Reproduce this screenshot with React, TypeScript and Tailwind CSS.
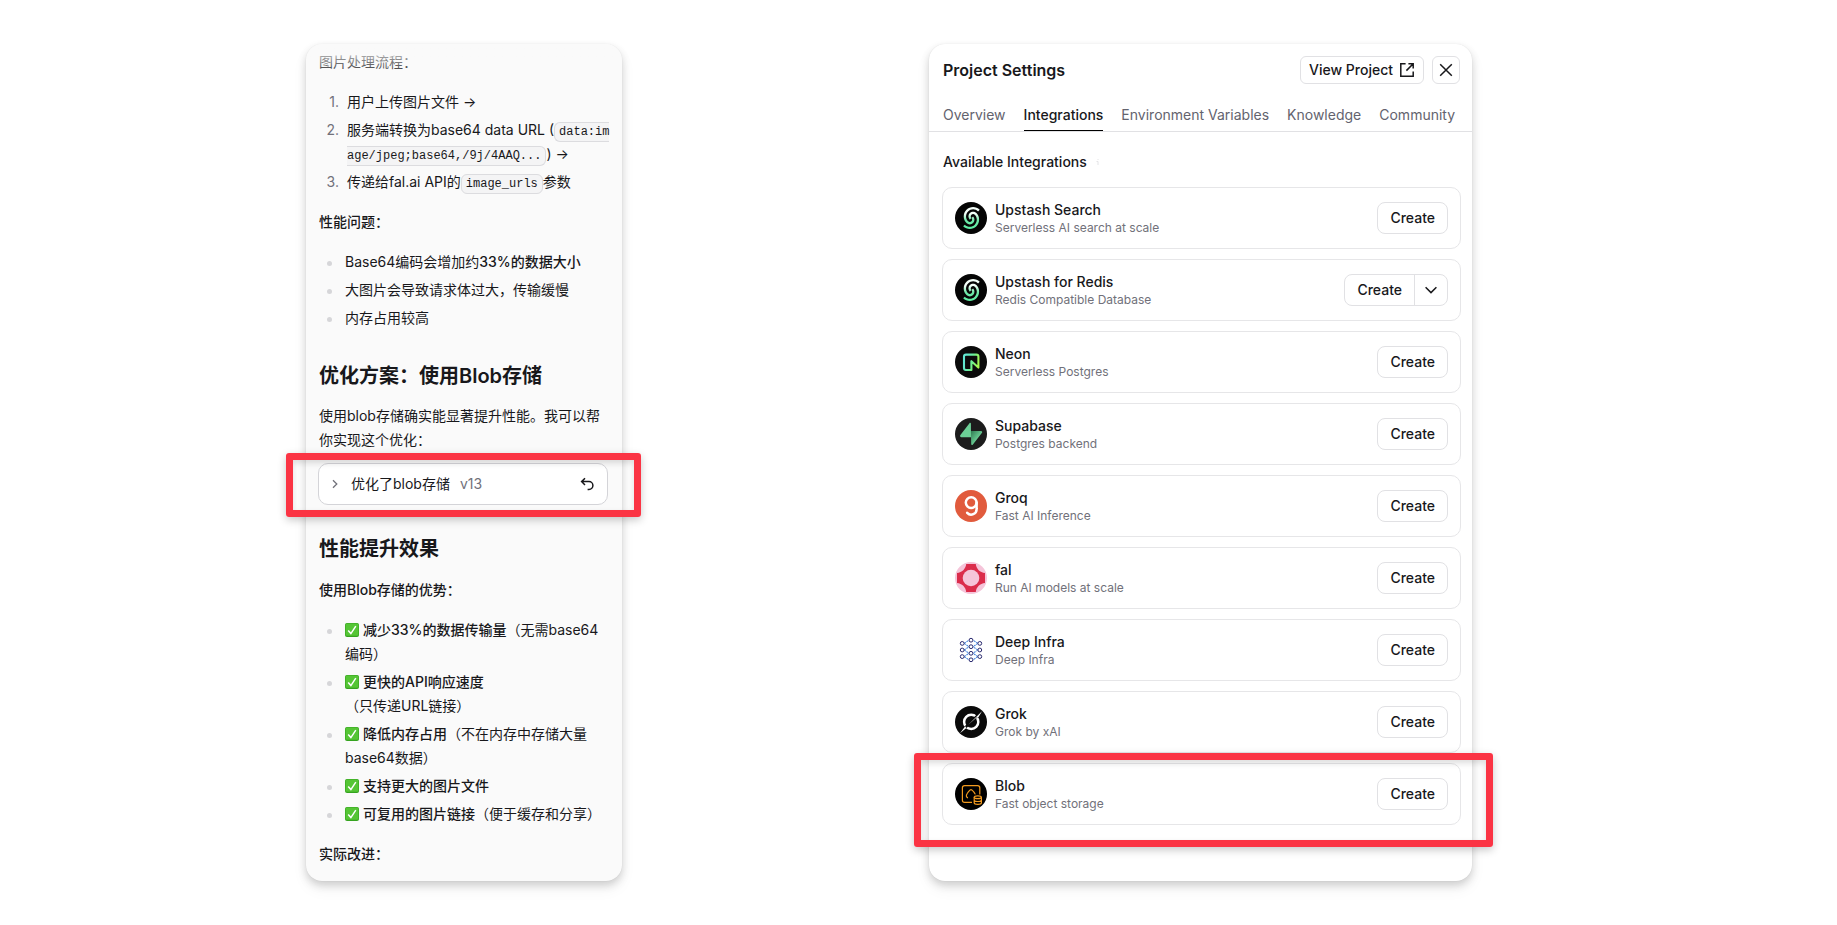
import type { ReactNode } from "react";

const highlight =
  "pointer-events-none absolute z-10 rounded-[3px] border-[7px] border-[#fb3444] shadow-[0_3px_8px_rgba(0,0,0,0.22),inset_0_3px_6px_rgba(0,0,0,0.14)]";

const panelShadow =
  "rounded-2xl shadow-[0_0_1px_rgba(0,0,0,0.12),0_4px_8px_rgba(0,0,0,0.17),0_8px_16px_rgba(0,0,0,0.05)]";

function Check() {
  return (
    <svg viewBox="0 0 14 14" className="mr-1 inline-block size-3.5 align-[-2px]" role="img" aria-label="✅">
      <rect width="14" height="14" rx="2" fill="#35a31f" />
      <rect x="0.6" y="0.6" width="12.8" height="12.2" rx="1.6" fill="#55c535" />
      <path d="M3.2 7.4 5.9 10.6 10.8 3.2" fill="none" stroke="#fff" strokeWidth="1.5" />
    </svg>
  );
}

function Bullet({ children }: { children: ReactNode }) {
  return (
    <li className="flex">
      <span className="mt-[11px] mr-[13px] ml-2 size-[5px] shrink-0 rounded-full bg-[#d6d6d9]" />
      <div className="min-w-0 whitespace-nowrap">{children}</div>
    </li>
  );
}

function Step({ n, children }: { n: number; children: ReactNode }) {
  return (
    <li className="flex">
      <span className="mr-2 w-5 shrink-0 text-right text-[#71717a]">{n}.</span>
      <div className="min-w-0 whitespace-nowrap">{children}</div>
    </li>
  );
}

function Code({ children }: { children: ReactNode }) {
  return (
    <code className="rounded-md border border-[#dcdcdf] bg-[#f4f4f5] px-1 py-[2px] font-['Liberation_Mono',monospace] text-xs">
      {children}
    </code>
  );
}

function ChatPanel() {
  return (
    <article
      className={`relative bg-[#fafafa] px-[13px] pt-1.5 pb-[15px] text-sm leading-6 text-[#18181b] ${panelShadow}`}
    >
      <div className="pointer-events-none absolute inset-x-0 top-0 h-8 rounded-t-2xl bg-linear-to-b from-[#fafafa] to-transparent" />
      <p>图片处理流程：</p>
      <ol className="mt-4 flex flex-col gap-1">
        <Step n={1}>用户上传图片文件 →</Step>
        <Step n={2}>
          服务端转换为base64 data URL (
          <Code>
            data:im
            <br />
            age/jpeg;base64,/9j/4AAQ...
          </Code>
          ) →
        </Step>
        <Step n={3}>
          传递给fal.ai API的<Code>image_urls</Code>参数
        </Step>
      </ol>
      <p className="mt-4 font-medium">性能问题：</p>
      <ul className="mt-4 flex flex-col gap-1">
        <Bullet>
          Base64编码会增加约<strong className="font-medium">33%的数据大小</strong>
        </Bullet>
        <Bullet>大图片会导致请求体过大，传输缓慢</Bullet>
        <Bullet>内存占用较高</Bullet>
      </ul>
      <h2 className="mt-8 text-xl leading-7 font-semibold">优化方案：使用Blob存储</h2>
      <p className="mt-3.5">使用blob存储确实能显著提升性能。我可以帮你实现这个优化：</p>
      <div className="relative mt-[11px] mr-px -ml-px">
        <div className="flex h-[42px] items-center rounded-[10px] border border-[#d4d4d8] bg-white px-3">
          <button type="button" className="flex items-center" aria-label="展开">
            <svg viewBox="0 0 8 12" className="h-3 w-2" fill="none" stroke="#71717a" strokeWidth="1.3">
              <path d="M2 2.2 5.8 6 2 9.8" />
            </svg>
          </button>
          <span className="ml-3">优化了blob存储</span>
          <span className="ml-2.5 text-[#71717a]">v13</span>
          <button type="button" className="ml-auto" aria-label="恢复此版本">
            <svg viewBox="0 0 16 16" className="size-4" fill="none" stroke="#18181b" strokeWidth="1.5">
              <path d="M6 2.2 2.6 5.6 6 9M2.8 5.6H10a3.9 3.9 0 0 1 0 7.8H8.6" />
            </svg>
          </button>
        </div>
        <div className={`-top-2.5 -right-[33px] -bottom-3 -left-8 ${highlight}`} />
      </div>
      <h2 className="mt-[30px] text-xl leading-7 font-semibold">性能提升效果</h2>
      <p className="mt-[15px] font-medium">使用Blob存储的优势：</p>
      <ul className="mt-4 flex flex-col gap-1">
        <Bullet>
          <Check />
          <strong className="font-medium">减少33%的数据传输量</strong>（无需base64
          <br />
          编码）
        </Bullet>
        <Bullet>
          <Check />
          <strong className="font-medium">更快的API响应速度</strong>
          <br />
          （只传递URL链接）
        </Bullet>
        <Bullet>
          <Check />
          <strong className="font-medium">降低内存占用</strong>（不在内存中存储大量
          <br />
          base64数据）
        </Bullet>
        <Bullet>
          <Check />
          <strong className="font-medium">支持更大的图片文件</strong>
        </Bullet>
        <Bullet>
          <Check />
          <strong className="font-medium">可复用的图片链接</strong>（便于缓存和分享）
        </Bullet>
      </ul>
      <p className="mt-4 font-medium">实际改进：</p>
    </article>
  );
}

function UpstashLogo({ id }: { id: string }) {
  return (
    <svg viewBox="0 0 32 32" className="size-8" aria-hidden="true">
      <defs>
        <linearGradient id={id} x1="0" y1="0" x2="0" y2="1">
          <stop offset="0.3" stopColor="#f4fff9" />
          <stop offset="0.6" stopColor="#6ee7a8" />
          <stop offset="1" stopColor="#5df0a4" />
        </linearGradient>
      </defs>
      <circle cx="16" cy="16" r="16" fill="#050505" />
      <g transform="translate(5.4 5) scale(0.92)">
        <path
          fill={`url(#${id})`}
          d="M13.8027 0C11.193 0 8.583.9952 6.5918 2.9863c-3.9823 3.9823-3.9823 10.4396 0 14.4219 1.9911 1.9911 5.2198 1.9911 7.211 0 1.991-1.9911 1.991-5.2198 0-7.211L12 12c.9956.9956.9956 2.6098 0 3.6055-.9956.9955-2.6099.9955-3.6055 0-2.9866-2.9868-2.9866-7.8297 0-10.8164 2.9868-2.9868 7.8297-2.9868 10.8164 0l1.8028-1.8028C19.0225.9952 16.4125 0 13.8027 0zM12 12c-.9956-.9956-.9956-2.6098 0-3.6055.9956-.9955 2.6098-.9955 3.6055 0 2.9867 2.9868 2.9867 7.8297 0 10.8164-2.9867 2.9868-7.8297 2.9868-10.8164 0l-1.8028 1.8028c3.9823 3.9822 10.4396 3.9822 14.4219 0 3.9823-3.9824 3.9823-10.4397 0-14.4219-.9956-.9956-2.3006-1.4922-3.6055-1.4922-1.3048 0-2.6099.4966-3.6054 1.4922-1.9912 1.9912-1.9912 5.2198 0 7.211z"
        />
      </g>
    </svg>
  );
}

function NeonLogo() {
  return (
    <svg viewBox="0 0 32 32" className="size-8" aria-hidden="true">
      <defs>
        <linearGradient id="neon" x1="0" y1="0.3" x2="1" y2="0.6">
          <stop offset="0.1" stopColor="#62e8d2" />
          <stop offset="0.6" stopColor="#6ff08c" />
          <stop offset="1" stopColor="#a6f94f" />
        </linearGradient>
      </defs>
      <circle cx="16" cy="16" r="16" fill="#0b0b0b" />
      <path
        d="M16.4 24H11A2 2 0 0 1 9 22V10.6a2 2 0 0 1 2-2H21.4a2 2 0 0 1 2 2V21.6L16.4 15.2V24Z"
        fill="none"
        stroke="url(#neon)"
        strokeWidth="2.1"
        strokeLinejoin="round"
      />
    </svg>
  );
}

function SupabaseLogo() {
  return (
    <svg viewBox="0 0 32 32" className="size-8" aria-hidden="true">
      <defs>
        <linearGradient id="supa" x1="0" y1="0" x2="0.6" y2="0.6">
          <stop offset="0" stopColor="#2f7a52" />
          <stop offset="1" stopColor="#6ccf96" />
        </linearGradient>
      </defs>
      <circle cx="16" cy="16" r="16" fill="#1c1c1c" />
      <path d="M16 13H26C27.2 13 27.6 14.2 26.8 15.1L17.7 26.7C17.2 27.4 16.2 27.1 16.2 26.3L16 19Z" fill="url(#supa)" />
      <path d="M15.9 5.6C15.9 4.8 15 4.5 14.5 5.2L5.4 16.9C4.7 17.9 5.2 19.2 6.4 19.2H16Z" fill="#6ccf96" />
    </svg>
  );
}

function GroqLogo() {
  return (
    <svg viewBox="0 0 32 32" className="size-8" aria-hidden="true">
      <circle cx="16" cy="16" r="16" fill="#e15b3d" />
      <g fill="none" stroke="#fff" strokeWidth="2.5" strokeLinecap="round">
        <circle cx="16.2" cy="12.6" r="5.4" />
        <path d="M21.6 12.6V18.9A5.4 5.4 0 0 1 12.2 22.8" />
      </g>
    </svg>
  );
}

function FalLogo() {
  return (
    <svg viewBox="0 0 32 32" className="size-8" aria-hidden="true">
      <circle cx="16" cy="16" r="16" fill="#f5c4d9" />
      <path
        d="M11.2 2H20.8C21.2 6.8 25 10.6 30 11V21C25 21.4 21.2 25.2 20.8 30H11.2C10.8 25.2 7 21.4 2 21V11C7 10.6 10.8 6.8 11.2 2Z"
        fill="#db2c4b"
      />
      <circle cx="16" cy="16" r="8.3" fill="#f5c4d9" />
    </svg>
  );
}

const sideY = [9.4, 16, 22.6];
const midY = [6.2, 12.7, 19.3, 25.8];

function DeepInfraLogo() {
  return (
    <svg viewBox="0 0 32 32" className="size-8" fill="none" aria-hidden="true">
      <g stroke="#4d8be0" strokeWidth="1.1" strokeDasharray="2 0.7">
        {sideY.map((y, i) => (
          <path
            key={y}
            d={`M9.2 ${y} 14 ${midY[i]}M9.2 ${y} 14 ${midY[i + 1]}M22.8 ${y} 18 ${midY[i]}M22.8 ${y} 18 ${midY[i + 1]}`}
          />
        ))}
      </g>
      <g stroke="#2b2b70" strokeWidth="1">
        {sideY.map((y) => (
          <g key={y}>
            <circle cx="7.2" cy={y} r="1.9" />
            <circle cx="24.8" cy={y} r="1.9" />
          </g>
        ))}
        {midY.map((y) => (
          <circle key={y} cx="16" cy={y} r="1.9" />
        ))}
      </g>
    </svg>
  );
}

function GrokLogo() {
  return (
    <svg viewBox="0 0 32 32" className="size-8" aria-hidden="true">
      <circle cx="16" cy="16" r="16" fill="#0a0a0a" />
      <circle cx="16.2" cy="15.9" r="7.1" fill="none" stroke="#fff" strokeWidth="2.5" />
      <path d="M7 24.6 25.5 6.6" stroke="#0a0a0a" strokeWidth="2.6" />
      <path d="M5 27.2 10.2 20.2 11.4 22ZM13 19 27 5.2 23.4 11.2 21.6 11.6Z" fill="#fff" />
    </svg>
  );
}

function BlobLogo() {
  return (
    <svg viewBox="0 0 32 32" className="size-8" aria-hidden="true">
      <circle cx="16" cy="16" r="16" fill="#000" />
      <g fill="none" stroke="#f29a1f" strokeWidth="1.2">
        <path d="M17 24.4H9.6A2.2 2.2 0 0 1 7.4 22.2V9.8A2.2 2.2 0 0 1 9.6 7.6H22.6A2.2 2.2 0 0 1 24.8 9.8V16.4" />
        <path d="M13 19.8C11.2 19.4 10.9 17.4 12 15.8C12.9 14.4 13.8 13.2 15.2 11.9Q16 11.3 16.8 11.9C18.2 13.1 19.6 14.6 20.3 16.4" />
        <ellipse cx="22.8" cy="19.3" rx="3.6" ry="1.4" />
        <path d="M19.2 19.3V24.8C19.2 27 26.4 27 26.4 24.8V19.3M19.2 22C19.2 24 26.4 24 26.4 22" />
      </g>
    </svg>
  );
}

type Integration = { name: string; desc: string; logo: ReactNode; menu?: boolean; marked?: boolean };

const integrations: Integration[] = [
  { name: "Upstash Search", desc: "Serverless AI search at scale", logo: <UpstashLogo id="upstash-search" /> },
  { name: "Upstash for Redis", desc: "Redis Compatible Database", logo: <UpstashLogo id="upstash-redis" />, menu: true },
  { name: "Neon", desc: "Serverless Postgres", logo: <NeonLogo /> },
  { name: "Supabase", desc: "Postgres backend", logo: <SupabaseLogo /> },
  { name: "Groq", desc: "Fast AI Inference", logo: <GroqLogo /> },
  { name: "fal", desc: "Run AI models at scale", logo: <FalLogo /> },
  { name: "Deep Infra", desc: "Deep Infra", logo: <DeepInfraLogo /> },
  { name: "Grok", desc: "Grok by xAI", logo: <GrokLogo /> },
  { name: "Blob", desc: "Fast object storage", logo: <BlobLogo />, marked: true },
];

const tabs = ["Overview", "Integrations", "Environment Variables", "Knowledge", "Community"];

function SettingsPanel() {
  return (
    <section className={`bg-white pb-14 text-sm leading-5 text-[#18181b] ${panelShadow}`}>
      <header className="flex items-center gap-2 px-3 pt-3 pl-3.5">
        <h1 className="mr-auto text-base leading-6 font-semibold">Project Settings</h1>
        <a
          href="#project"
          className="flex h-7 items-center gap-1.5 rounded-md border border-[#e1e1e4] px-2 font-medium"
        >
          View Project
          <svg viewBox="0 0 16 16" className="size-4" fill="none" stroke="#18181b" strokeWidth="1.5">
            <path d="M6.6 1.8H1.8V14.2H14.2V9.4M9.4 1.8H14.2V6.6M14.2 1.8 7.4 8.6" />
          </svg>
        </a>
        <button
          type="button"
          aria-label="Close"
          className="flex size-7 items-center justify-center rounded-md border border-[#e1e1e4]"
        >
          <svg viewBox="0 0 16 16" className="size-4" fill="none" stroke="#18181b" strokeWidth="1.5">
            <path d="M2.2 2.2 13.8 13.8M13.8 2.2 2.2 13.8" />
          </svg>
        </button>
      </header>
      <nav className="flex gap-[18px] border-b border-[#e1e1e4] px-3.5 pt-[21px] whitespace-nowrap">
        {tabs.map((tab) => (
          <a
            key={tab}
            href={`#${tab}`}
            className={
              tab === "Integrations"
                ? "border-b border-black pb-[5px] font-medium"
                : "border-b border-transparent pb-[5px] text-[#63636e]"
            }
          >
            {tab}
          </a>
        ))}
      </nav>
      <div className="pt-5 pr-[11px] pl-[13px]">
        <h2 className="flex items-center gap-2 px-px font-medium">
          Available Integrations
          <svg viewBox="0 0 6 8" className="h-2 w-1.5" fill="none" stroke="#e4e4e7" strokeWidth="1" aria-hidden="true">
            <path d="M3 1V2M1.5 3.5H3V7" />
          </svg>
        </h2>
        <ul className="mt-[15px] flex flex-col gap-2.5">
          {integrations.map((item) => (
            <li key={item.name} className="relative">
              <div className="flex items-center rounded-[10px] border border-[#e6e6e8] p-3">
                {item.logo}
                <div className="ml-2 flex-1">
                  <h3 className="font-medium">{item.name}</h3>
                  <p className="text-xs leading-4 text-[#71717a]">{item.desc}</p>
                </div>
                <div className="flex h-8 rounded-lg border border-[#e1e1e4]">
                  <button type="button" className="px-3 font-medium">
                    Create
                  </button>
                  {item.menu && (
                    <button
                      type="button"
                      aria-label="More create options"
                      className="flex w-[33px] items-center justify-center border-l border-[#e1e1e4]"
                    >
                      <svg viewBox="0 0 16 16" className="size-4" fill="none" stroke="#18181b" strokeWidth="1.5">
                        <path d="M2.6 5.2 8 10.6 13.4 5.2" />
                      </svg>
                    </button>
                  )}
                </div>
              </div>
              {item.marked && <div className={`-top-2.5 -right-8 -bottom-[22px] -left-7 ${highlight}`} />}
            </li>
          ))}
        </ul>
      </div>
    </section>
  );
}

export default function App() {
  return (
    <main className="grid min-h-screen grid-cols-[306fr_minmax(316px,316fr)_307fr_minmax(543px,543fr)_365fr] items-start bg-white py-11 font-[Inter,'Noto_Sans_CJK_SC',sans-serif]">
      <div className="col-start-2">
        <ChatPanel />
      </div>
      <div className="col-start-4">
        <SettingsPanel />
      </div>
    </main>
  );
}
